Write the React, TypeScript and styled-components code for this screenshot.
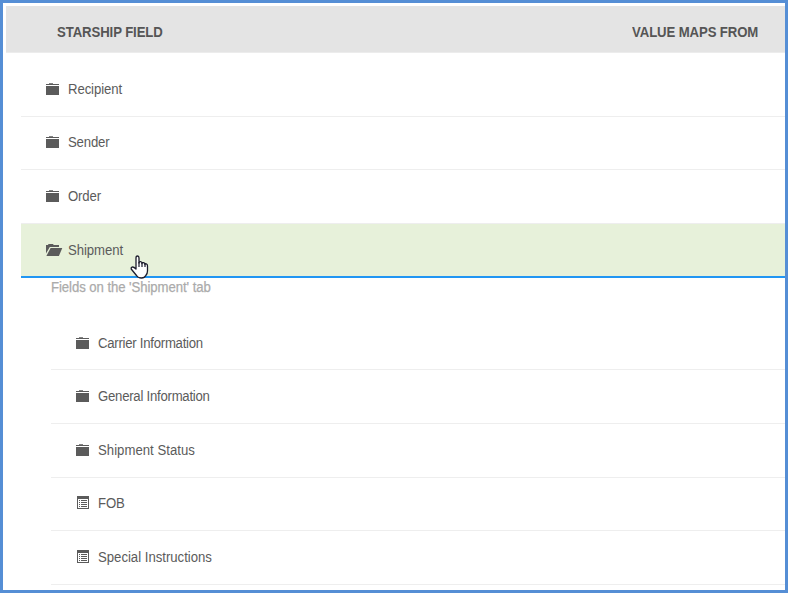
import React from "react";
import styled, { createGlobalStyle } from "styled-components";

const GlobalStyle = createGlobalStyle`
  * { box-sizing: border-box; }
  body { margin: 0; background: #fff; }
`;

const Frame = styled.main`
  width: 788px;
  height: 593px;
  border: 3px solid #558ed5;
  padding: 3px 0 0 3px;
  overflow: hidden;
  background: #fff;
  color: #5b5b5b;
  font: 14px/16px "Liberation Sans", Arial, sans-serif;
`;

const Header = styled.header`
  height: 47px;
  padding: 6px 27px 0 51px;
  display: flex;
  align-items: center;
  justify-content: space-between;
  background: #e4e4e4;
  border-bottom: 1px solid #ececec;
  color: #555;
  font-weight: 700;
`;

const HeaderCell = styled.span<{ $spacing: number; $align: "left" | "right" }>`
  letter-spacing: ${(p) => p.$spacing}px;
  transform: scaleX(0.94);
  transform-origin: ${(p) => p.$align} center;
`;

const Tree = styled.div`
  padding: 10px 0 0 15px;
`;

const Row = styled.div<{ $open?: boolean }>`
  position: relative;
  height: ${(p) => (p.$open ? 53.8 : 53.6)}px;
  padding-left: 25px;
  display: flex;
  align-items: center;
  border-bottom: ${(p) => (p.$open ? "2px solid #2196f3" : "1px solid #eeeeee")};
  background: ${(p) => (p.$open ? "#e7f1da" : "transparent")};
`;

const Glyph = styled.svg<{ $raise: number }>`
  width: 17px;
  height: 14px;
  margin: 0 5px ${(p) => p.$raise}px 0;
  flex: none;
  shape-rendering: crispEdges;
`;

const Label = styled.span<{ $spacing: number }>`
  padding-bottom: 1px;
  white-space: nowrap;
  letter-spacing: ${(p) => p.$spacing}px;
  transform: scaleX(0.94);
  transform-origin: left center;
`;

const OpenLabel = styled(Label)`
  padding-bottom: 0;
`;

const Children = styled.section`
  margin-left: 30px;
`;

const Hint = styled.p`
  margin: 0;
  height: 39.2px;
  padding-top: 1px;
  color: #ababab;
  letter-spacing: -0.07px;
  -webkit-text-stroke: 0.25px #ababab;
  transform: scaleX(0.94);
  transform-origin: left center;
`;

const Pointer = styled.svg`
  position: absolute;
  left: 109px;
  top: 31px;
  width: 19px;
  height: 24px;
  z-index: 1;
`;

type Kind = "folder" | "open" | "field";

const Icon = ({ kind }: { kind: Kind }) => (
  <Glyph viewBox="0 0 17 14" fill="#5b5b5b" $raise={kind === "open" ? 0 : 1}>
    {kind === "folder" && (
      <>
        <path d="M3 1h4v1H3z" opacity=".75" />
        <path d="M0 2h13v1H0z" />
        <path d="M0 4h13v9H0z" />
      </>
    )}
    {kind === "open" && (
      <path
        shapeRendering="auto"
        d="M0 2h2l.5-1H7l.7 1H13v2H3.8L0 10.5zM4.6 5H16.3L12.9 13H.4z"
      />
    )}
    {kind === "field" && (
      <path
        fillRule="evenodd"
        d="M1 0h12v13H1zM2 3v9h10V3zM3 4h1v1H3zM5 4h6v1H5zM3 6h1v1H3zM5 6h6v1H5zM3 8h1v1H3zM5 8h6v1H5zM3 10h1v1H3zM5 10h6v1H5z"
      />
    )}
  </Glyph>
);

const Hand = () => (
  <Pointer viewBox="0 0 19 24">
    <path
      d="M6 14V3Q6 1 7.5 1T9 3V8Q9 6.5 10.5 6.7T12 8.5Q12 7.3 13.5 7.6T15 9.5Q15 8.5 16.3 8.8T17.5 11V16Q17.5 18.5 15.8 20.5Q14.5 23 11.5 23Q8 23 6.5 20.5L1.2 14Q.8 12.6 2 12.1Q3.5 11.5 6 14Z"
      fill="#fff"
      stroke="#1c1c2c"
      strokeWidth="1.3"
      strokeLinejoin="round"
    />
    <path d="M9 7v5M12 8v4M15 9v3" stroke="#1c1c2c" strokeWidth="1.2" />
  </Pointer>
);

const parents = [
  { name: "Recipient", spacing: -0.1 },
  { name: "Sender", spacing: -0.18 },
  { name: "Order", spacing: -0.15 },
];

const fields: { name: string; kind: Kind; spacing: number }[] = [
  { name: "Carrier Information", kind: "folder", spacing: -0.27 },
  { name: "General Information", kind: "folder", spacing: -0.26 },
  { name: "Shipment Status", kind: "folder", spacing: 0.02 },
  { name: "FOB", kind: "field", spacing: -0.1 },
  { name: "Special Instructions", kind: "field", spacing: -0.01 },
];

export default function App() {
  return (
    <>
      <GlobalStyle />
      <Frame>
        <Header>
          <HeaderCell $spacing={-0.1} $align="left">STARSHIP FIELD</HeaderCell>
          <HeaderCell $spacing={-0.11} $align="right">VALUE MAPS FROM</HeaderCell>
        </Header>
        <Tree>
          {parents.map(({ name, spacing }) => (
            <Row key={name}>
              <Icon kind="folder" />
              <Label $spacing={spacing}>{name}</Label>
            </Row>
          ))}
          <Row $open>
            <Icon kind="open" />
            <OpenLabel $spacing={-0.06}>Shipment</OpenLabel>
            <Hand />
          </Row>
          <Children>
            <Hint>Fields on the 'Shipment' tab</Hint>
            {fields.map(({ name, kind, spacing }) => (
              <Row key={name}>
                <Icon kind={kind} />
                <Label $spacing={spacing}>{name}</Label>
              </Row>
            ))}
          </Children>
        </Tree>
      </Frame>
    </>
  );
}
